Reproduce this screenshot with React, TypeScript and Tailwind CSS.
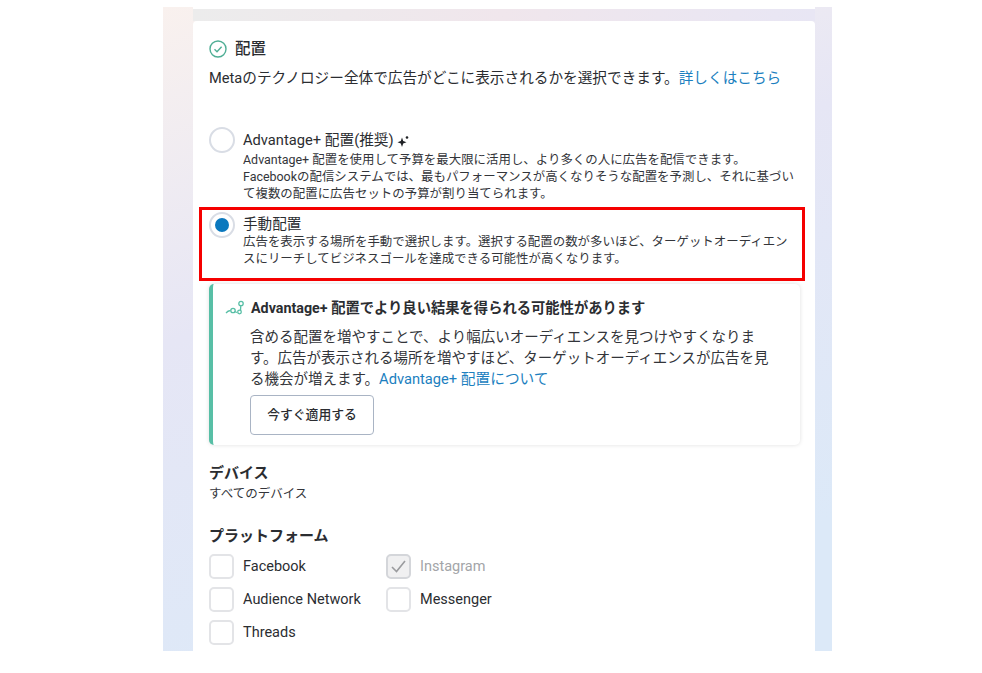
import React from 'react';

const font = { fontFamily: 'Roboto, "Noto Sans CJK JP", sans-serif' };

function Radio({ checked = false }: { checked?: boolean }) {
  return (
    <div className="w-[26px] h-[26px] shrink-0 rounded-full border-2 border-[#d9dde5] bg-white flex items-center justify-center">
      {checked && <div className="w-[14px] h-[14px] rounded-full bg-[#0a78be]" />}
    </div>
  );
}

function Check({ label, disabled = false }: { label: string; disabled?: boolean }) {
  return (
    <div className="flex items-center h-[25px]">
      <div
        className={`w-[25px] h-[25px] shrink-0 rounded-[5px] border-2 flex items-center justify-center ${
          disabled ? 'border-[#d4d6da] bg-[#f0f0f1]' : 'border-[#e3e4e7] bg-white'
        }`}
      >
        {disabled && (
          <svg width="17" height="15" viewBox="0 0 17 15" fill="none">
            <path d="M2 8l4.5 4.5L15 2" stroke="#9a9b9e" strokeWidth="1.6" />
          </svg>
        )}
      </div>
      <span className={`ml-[9px] text-[14.5px] ${disabled ? 'text-[#a3a5a8]' : 'text-[#2b2d31]'}`}>{label}</span>
    </div>
  );
}

export default function App() {
  return (
    <div className="w-[982px] h-[673px] bg-white overflow-hidden pt-[7px] pl-[163px]" style={font}>
      <div className="w-[669px] h-[644px] bg-[linear-gradient(160deg,#f9f1ee_0%,#e6e6f5_38%,#dce9f8_85%)] flex">
        <div className="w-[30px] shrink-0" />
        <div className="w-[622px] flex flex-col">
          <div className="h-[2px] bg-white" />
          <div className="h-[12px] bg-gradient-to-r from-[#ececec] via-[#f0e6ec] to-[#e8e6f4]" />
          <div className="flex-1 bg-white rounded-t-[4px] pl-4 pt-[18px] text-[#2b2d31]">
            <div className="flex items-center h-[20px]">
              <svg width="18" height="18" viewBox="0 0 18 18" fill="none">
                <circle cx="9" cy="9" r="8" stroke="#4fae95" strokeWidth="1.4" />
                <path d="M5.5 9.2l2.5 2.5 4.6-5" stroke="#4fae95" strokeWidth="1.4" />
              </svg>
              <span className="ml-2 text-[15.5px] font-medium leading-[20px]">配置</span>
            </div>
            <p className="mt-[9px] text-[14.65px] leading-[20px] whitespace-nowrap">
              Metaのテクノロジー全体で広告がどこに表示されるかを選択できます。
              <span className="text-[#1c7fc0]">詳しくはこちら</span>
            </p>

            <div className="mt-[39px] flex items-start">
              <Radio />
              <div className="ml-[8px] pt-[5px]">
                <div className="flex items-center h-[17px] text-[14.7px] leading-[17px]">
                  Advantage+ 配置(推奨)
                  <svg className="ml-[3px]" width="12" height="12" viewBox="0 0 12 12" fill="#1f2125">
                    <path d="M5 2.5L6.2 6 9.5 7.2 6.2 8.4 5 12 3.8 8.4 0.5 7.2 3.8 6z" />
                    <circle cx="10" cy="2.5" r="1.3" />
                  </svg>
                </div>
                <div className="mt-[2px] text-[12.45px] leading-[17px] whitespace-nowrap text-[#33353a]">
                  Advantage+ 配置を使用して予算を最大限に活用し、より多くの人に広告を配信できます。
                  <br />
                  Facebookの配信システムでは、最もパフォーマンスが高くなりそうな配置を予測し、それに基づい
                  <br />
                  て複数の配置に広告セットの予算が割り当てられます。
                </div>
              </div>
            </div>

            {/* red highlight around the selected option */}
            <div className="mt-[5px] -ml-[10px] w-[606px] h-[74px] border-[3px] border-[#f50000] pl-[7px] pt-[2px] flex items-start">
              <Radio checked />
              <div className="ml-[8px] pt-[4px]">
                <div className="text-[14.6px] leading-[17px]">手動配置</div>
                <div className="text-[12.45px] leading-[17px] whitespace-nowrap text-[#33353a]">
                  広告を表示する場所を手動で選択します。選択する配置の数が多いほど、ターゲットオーディエン
                  <br />
                  スにリーチしてビジネスゴールを達成できる可能性が高くなります。
                </div>
              </div>
            </div>

            <div className="mt-[3px] w-[591px] h-[161px] rounded-[5px] border-l-[4px] border-[#58bfa6] bg-white shadow-[0_0_4px_rgba(0,0,0,0.13)] pl-[12px] pt-[14px]">
              <div className="flex items-center h-[20px]">
                <svg width="20" height="16" viewBox="0 0 20 16" fill="none" stroke="#58bfa6" strokeWidth="1.3">
                  <path d="M1 13c2-2 3-3 4.5-2M9.5 11.5l2.5 1M15.5 10.5l.3-5" />
                  <circle cx="8" cy="10.5" r="2.2" />
                  <circle cx="14.5" cy="12" r="1.8" />
                  <circle cx="16" cy="3.5" r="2.2" />
                </svg>
                <span className="ml-[6px] text-[14.3px] font-bold leading-[20px] whitespace-nowrap">
                  Advantage+ 配置でより良い結果を得られる可能性があります
                </span>
              </div>
              <p className="mt-[9px] ml-[25px] text-[14.5px] leading-[21px] whitespace-nowrap text-[#33353a]">
                含める配置を増やすことで、より幅広いオーディエンスを見つけやすくなりま
                <br />
                す。広告が表示される場所を増やすほど、ターゲットオーディエンスが広告を見
                <br />
                る機会が増えます。
                <span className="text-[#1c7fc0] text-[14.7px]">Advantage+ 配置について</span>
              </p>
              <button className="mt-[5px] ml-[25px] w-[124px] h-[40px] rounded-[4px] border border-[#a9b4c4] bg-white text-[12.8px] font-medium text-[#2b2d31]">
                今すぐ適用する
              </button>
            </div>

            <div className="mt-[18px] text-[15px] font-bold leading-[20px]">デバイス</div>
            <div className="mt-[2px] text-[12.5px] leading-[18px] text-[#33353a]">すべてのデバイス</div>

            <div className="mt-[23px] text-[15px] font-bold leading-[20px]">プラットフォーム</div>
            <div className="mt-[8px] grid grid-cols-[177px_1fr] gap-y-[8px]">
              <Check label="Facebook" />
              <Check label="Instagram" disabled />
              <Check label="Audience Network" />
              <Check label="Messenger" />
              <Check label="Threads" />
            </div>
          </div>
        </div>
        <div className="flex-1" />
      </div>
    </div>
  );
}
